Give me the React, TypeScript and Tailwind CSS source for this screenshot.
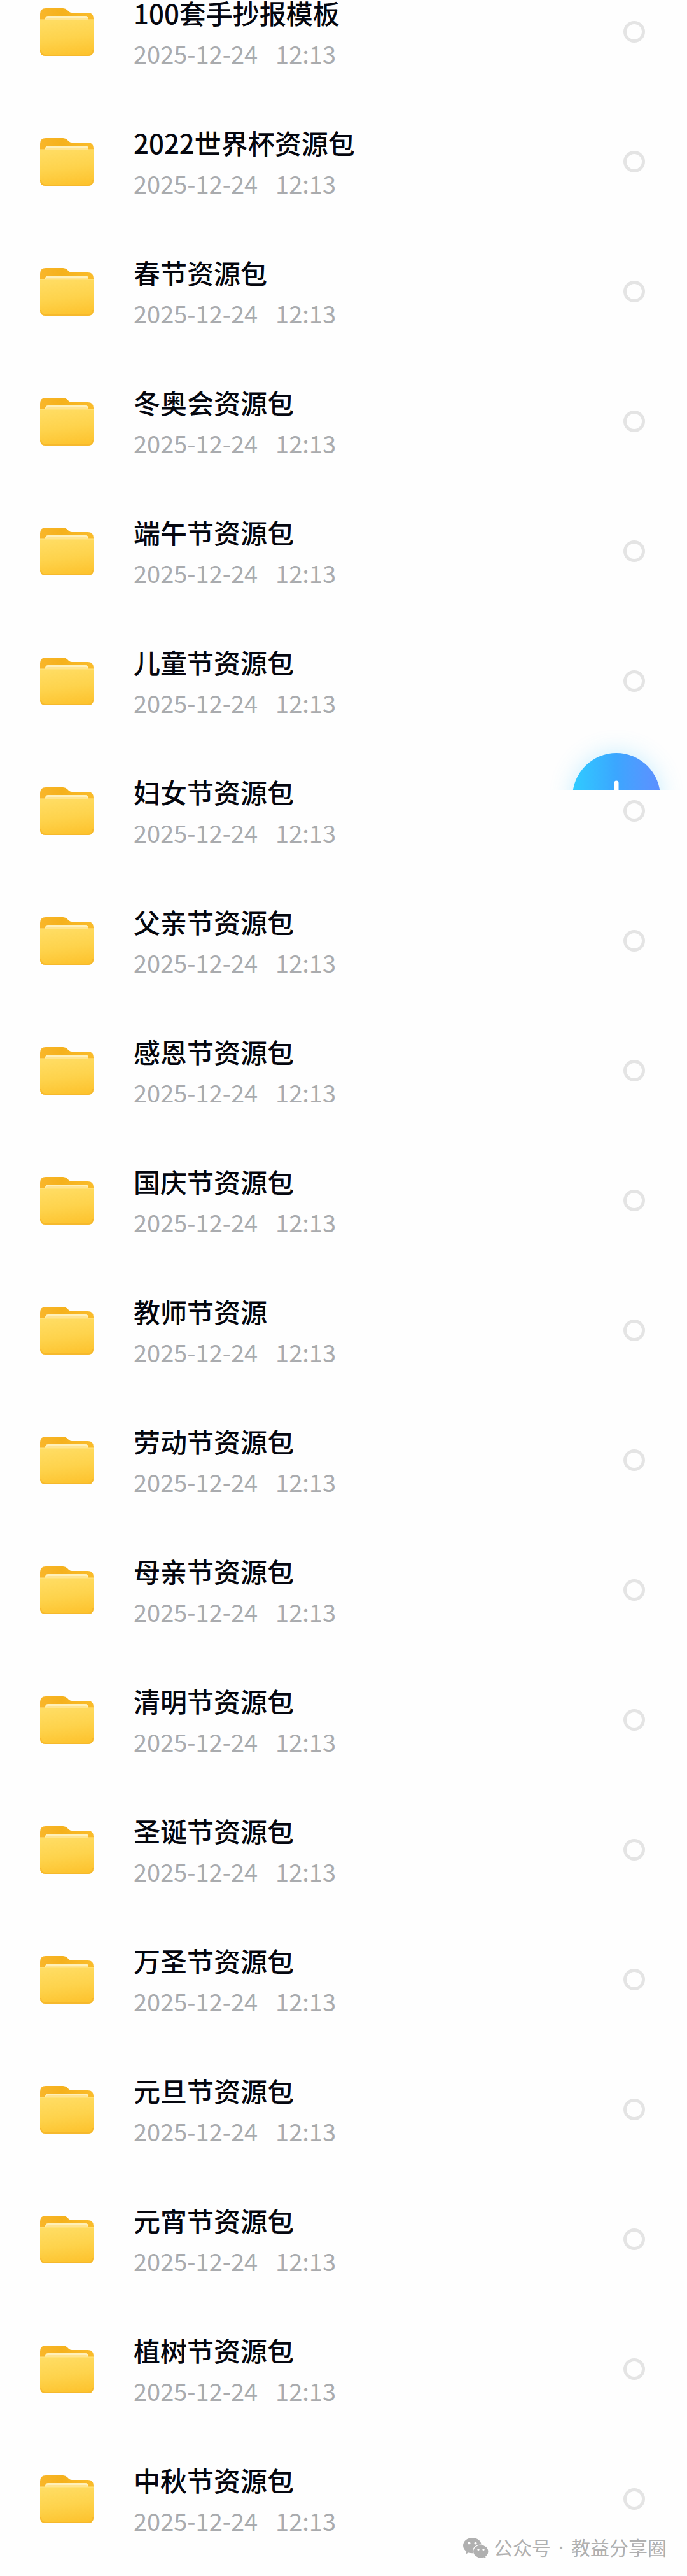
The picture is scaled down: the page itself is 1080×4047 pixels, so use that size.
import { useState } from "react";

type Folder = {
  name: string;
  date: string;
  time: string;
};

const FOLDERS: Folder[] = [
  "100套手抄报模板",
  "2022世界杯资源包",
  "春节资源包",
  "冬奥会资源包",
  "端午节资源包",
  "儿童节资源包",
  "妇女节资源包",
  "父亲节资源包",
  "感恩节资源包",
  "国庆节资源包",
  "教师节资源",
  "劳动节资源包",
  "母亲节资源包",
  "清明节资源包",
  "圣诞节资源包",
  "万圣节资源包",
  "元旦节资源包",
  "元宵节资源包",
  "植树节资源包",
  "中秋节资源包",
].map((name) => ({ name, date: "2025-12-24", time: "12:13" }));

function FolderIcon() {
  return (
    <svg viewBox="0 0 84 75" className="h-[75px] w-[84px] shrink-0" aria-hidden="true">
      <defs>
        <linearGradient id="folder-back" x1="0" y1="0" x2="1" y2="0">
          <stop offset="0" stopColor="#f9b62a" />
          <stop offset="0.4" stopColor="#f5b11c" />
          <stop offset="1" stopColor="#fabc2c" />
        </linearGradient>
        <linearGradient id="folder-front" x1="0.4" y1="0" x2="0.6" y2="1">
          <stop offset="0" stopColor="#ffdc62" />
          <stop offset="0.5" stopColor="#fed34c" />
          <stop offset="1" stopColor="#fdc32e" />
        </linearGradient>
      </defs>
      <path
        d="M0 9Q0 0 9 0H36Q40 0 42.500 2.500L45 5Q47 7 50 7H75Q84 7 84 16V40H0Z"
        fill="url(#folder-back)"
      />
      <path d="M8 24V17Q8 12 13 12H71Q76 12 76 17V24Z" fill="#ffe391" />
      <path d="M8 18Q8 12 13 12H71Q76 12 76 18Q75 15 71 15H13Q9 15 8 18Z" fill="#fff0b8" />
      <path d="M0 18H84V66Q84 75 75 75H9Q0 75 0 66Z" fill="url(#folder-front)" />
      <path d="M0 18H84" stroke="#ffe68a" strokeWidth="1" />
      <path d="M1 66Q1 74 9 74H75Q83 74 83 66" fill="none" stroke="#f6b92d" strokeWidth="2" />
    </svg>
  );
}

function WechatIcon() {
  return (
    <svg viewBox="0 0 40 33" className="h-[33px] w-10 shrink-0" aria-hidden="true">
      <path
        d="M14.500 0C6.500 0 0 5.400 0 12.200C0 16 2 19.200 5.200 21.400L4.200 25.500L8.800 23.200C10.600 23.800 12.500 24.200 14.500 24.200C22.500 24.200 29 18.900 29 12.200C29 5.400 22.500 0 14.500 0Z"
        fill="#b0b0b0"
      />
      <path
        d="M28 11C21 11 15.500 15.700 15.500 21.500C15.500 27.300 21 32 28 32C29.700 32 31.200 31.700 32.600 31.300L36.600 33L35.800 29.600C38.400 27.600 40 24.800 40 21.500C40 15.700 35 11 28 11Z"
        fill="#b0b0b0"
        stroke="#fff"
        strokeWidth="1.200"
      />
      <circle cx="9.500" cy="8.500" r="2" fill="#fff" />
      <circle cx="19.500" cy="8.500" r="2" fill="#fff" />
      <circle cx="24" cy="18.500" r="1.600" fill="#fff" />
      <circle cx="32" cy="18.500" r="1.600" fill="#fff" />
    </svg>
  );
}

export default function App() {
  const [selected, setSelected] = useState<string[]>([]);

  function toggle(name: string) {
    setSelected((prev) =>
      prev.includes(name) ? prev.filter((n) => n !== name) : [...prev, name]
    );
  }

  return (
    <main className="relative min-h-screen overflow-hidden bg-[#fefefe] font-['Noto_Sans_CJK_SC',sans-serif]">
      {/* the list is scrolled a little, so the first row starts above the top edge */}
      <ul className="-mt-[52px]">
        {FOLDERS.map((folder) => (
          <li key={folder.name}>
            <label className="flex h-[204px] cursor-pointer items-center pr-[66px] pl-[63px]">
              <FolderIcon />
              <span className="ml-[63px] flex min-w-0 flex-1 flex-col gap-6 pt-1">
                <span className="text-[42px] leading-10 font-medium whitespace-nowrap text-[#05070f]">
                  {folder.name}
                </span>
                <span className="flex gap-7 text-[38px] leading-10 text-[#a9abae]">
                  <span>{folder.date}</span>
                  <span>{folder.time}</span>
                </span>
              </span>
              <input
                type="checkbox"
                checked={selected.includes(folder.name)}
                onChange={() => toggle(folder.name)}
                className="size-[34px] shrink-0 appearance-none rounded-full border-5 border-[#e4e4e4] checked:border-[#3b9dff] checked:bg-[#3b9dff]"
              />
            </label>
          </li>
        ))}
      </ul>

      {/* add button, its lower half is cut off */}
      <div className="absolute top-[1143px] right-0 flex h-[98px] w-[222px] justify-center overflow-hidden pt-10">
        <button
          aria-label="新建"
          className="flex size-[138px] shrink-0 items-center justify-center rounded-full bg-linear-to-r from-[#2fcbff] via-[#3ba6ff] to-[#5c8fff] shadow-[0_0_36px_rgba(70,200,255,0.3)]"
        >
          <svg viewBox="0 0 52 52" className="size-[52px]" aria-hidden="true">
            <path d="M26 4V48M4 26H48" stroke="#fff" strokeWidth="7" strokeLinecap="round" />
          </svg>
        </button>
      </div>

      <div className="absolute right-8 bottom-6 flex items-center gap-2 text-[#b0b0b0]">
        <WechatIcon />
        <p className="flex gap-3 font-['Noto_Sans','Noto_Sans_CJK_SC',sans-serif] text-[30px] leading-10">
          <span>公众号</span>
          <span>·</span>
          <span>教益分享圈</span>
        </p>
      </div>
    </main>
  );
}
